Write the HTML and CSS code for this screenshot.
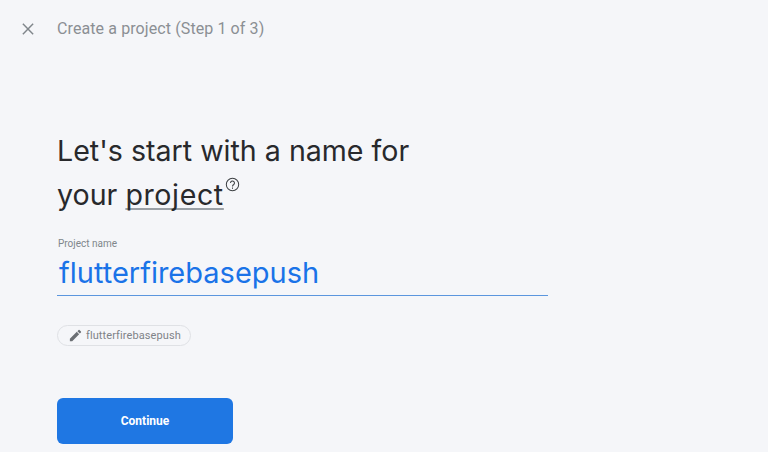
FILE: index.html
```html
<!DOCTYPE html>
<html lang="en">
<head>
<meta charset="utf-8">
<title>Create a project</title>
<link rel="stylesheet" href="styles.css">
</head>
<body>
<header class="topbar">
  <svg class="close" viewBox="0 0 14 14" aria-hidden="true"><path d="M1 1l12 12M13 1L1 13"/></svg>
  <span class="step">Create a project (Step 1 of 3)</span>
</header>
<main class="content">
  <h1 class="title">Let's start with a name for<br>your <span class="term">project</span><svg class="help" viewBox="0 0 16 16" aria-hidden="true"><circle cx="8" cy="8" r="6.6"/><path d="M5.9 6.4a2.1 2.1 0 1 1 3.4 1.6c-.8.6-1.3 1-1.3 2"/><path d="M8 11.2v1.4"/></svg></h1>
  <div class="field">
    <label class="label">Project name</label>
    <div class="value">flutterfirebasepush</div>
  </div>
  <div class="chip">
    <svg class="pencil" viewBox="0 0 24 24" aria-hidden="true"><path d="M3 17.25V21h3.75L17.81 9.94l-3.75-3.75L3 17.25zM20.71 7.04a1 1 0 0 0 0-1.41l-2.34-2.34a1 1 0 0 0-1.41 0l-1.83 1.83 3.75 3.75 1.83-1.83z"/></svg>
    <span>flutterfirebasepush</span>
  </div>
  <button class="continue" type="button">Continue</button>
</main>
</body>
</html>
```
FILE: styles.css
```css
html, body { margin: 0; padding: 0; }
body {
  width: 768px;
  height: 452px;
  overflow: hidden;
  background: #f5f6f9;
  font-family: Roboto, "Liberation Sans", sans-serif;
}
.topbar {
  display: flex;
  align-items: center;
  height: 57px;
  padding-left: 22px;
}
.close {
  width: 12px;
  height: 12px;
  margin-right: 23px;
  fill: none;
  stroke: #80868b;
  stroke-width: 1.7;
}
.step {
  font-size: 16px;
  letter-spacing: 0.1px;
  color: #8b8f94;
}
.content {
  padding: 72px 0 0 57px;
}
.title {
  margin: 0;
  font-family: Inter, "Open Sans", sans-serif;
  font-size: 28.6px;
  font-weight: 400;
  line-height: 44px;
  color: #28292c;
}
.term {
  letter-spacing: 0.6px;
  text-decoration: underline;
  text-decoration-color: #9aa0a6;
  text-decoration-thickness: 2px;
  text-decoration-skip-ink: none;
  text-underline-offset: 3px;
}
.help {
  width: 15px;
  height: 15px;
  vertical-align: 13px;
  margin-left: 1px;
  fill: none;
  stroke: #3c4043;
  stroke-width: 1.1;
}
.field {
  width: 491px;
  margin-top: 20px;
  border-bottom: 1px solid #5b96de;
}
.label {
  display: block;
  padding-left: 1px;
  font-size: 10px;
  line-height: 13px;
  color: #80868b;
}
.value {
  padding-left: 2px;
  font-family: Inter, "Open Sans", sans-serif;
  font-size: 29px;
  line-height: 45px;
  color: #1a73e8;
}
.chip {
  display: inline-flex;
  align-items: center;
  box-sizing: border-box;
  height: 21px;
  margin-top: 29px;
  padding: 0 9px 0 10px;
  border: 1px solid #dfe1e5;
  border-radius: 11px;
  font-size: 11px;
  letter-spacing: 0.1px;
  color: #7f8388;
}
.pencil {
  width: 15px;
  height: 15px;
  margin-right: 3px;
  fill: #6b6f74;
}
.continue {
  display: block;
  width: 176px;
  height: 46px;
  margin-top: 51px;
  border: 0;
  border-radius: 6px;
  background: #1f77e3;
  color: #fff;
  font-family: Roboto, "Liberation Sans", sans-serif;
  font-size: 12px;
  font-weight: 700;
}
```
